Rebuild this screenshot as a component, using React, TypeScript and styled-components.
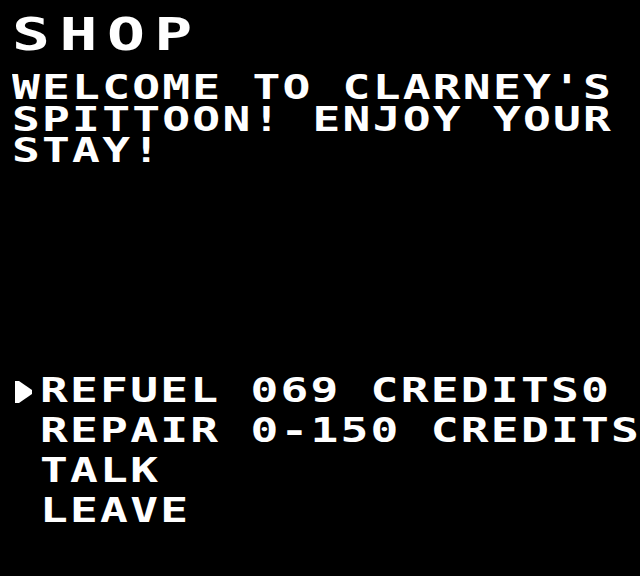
import React from "react";
import styled, { createGlobalStyle } from "styled-components";

const Global = createGlobalStyle`
  html, body {
    margin: 0;
    padding: 0;
    background: #000;
  }
  body {
    font-family: "DejaVu Sans Mono", "Liberation Mono", monospace;
    color: #fff;
  }
`;

const Screen = styled.div`
  width: 640px;
  height: 576px;
  background: #000;
  box-sizing: border-box;
  padding: 12px 0 45px 12px;
  display: flex;
  flex-direction: column;
  overflow: hidden;
`;

const Title = styled.h1`
  margin: 0;
  font-family: "DejaVu Sans Mono", monospace;
  font-weight: 700;
  font-size: 45px;
  line-height: 45px;
  letter-spacing: 6.8px;
  color: #fff;
  white-space: pre;
  transform: scaleX(1.4);
  transform-origin: left center;
`;

const Message = styled.div`
  margin-top: 15px;
  display: flex;
  flex-direction: column;
`;

const TextLine = styled.div<{ $pitch: number }>`
  font-family: "DejaVu Sans Mono", monospace;
  font-weight: 700;
  font-size: 33px;
  line-height: ${(p) => p.$pitch}px;
  letter-spacing: 1.6px;
  color: #fff;
  white-space: pre;
  transform: scaleX(1.4);
  transform-origin: left center;
`;

const Menu = styled.ul`
  list-style: none;
  margin: auto 0 0 0;
  padding: 0;
  display: flex;
  flex-direction: column;
`;

const MenuRow = styled.li`
  display: flex;
  align-items: center;
  height: 40px;
`;

const CursorCell = styled.div`
  width: 28px;
  height: 40px;
  display: flex;
  align-items: center;
  flex-shrink: 0;
  padding-left: 3px;
  box-sizing: border-box;
  padding-top: 1px;
`;

const Cursor = () => (
  <svg width="17" height="22" viewBox="0 0 17 22">
    <polygon points="0,0 4,0 17,9 17,13 4,22 0,22" fill="#fff" />
  </svg>
);

const messageLines = ["WELCOME TO CLARNEY'S", "SPITTOON! ENJOY YOUR", "STAY!"];

const items = [
  { label: "REFUEL 069 CREDITS0", selected: true },
  { label: "REPAIR 0-150 CREDITS", selected: false },
  { label: "TALK", selected: false },
  { label: "LEAVE", selected: false },
];

export default function App() {
  return (
    <>
      <Global />
      <Screen>
        <Title>SHOP</Title>
        <Message>
          {messageLines.map((l) => (
            <TextLine key={l} $pitch={31.5}>
              {l}
            </TextLine>
          ))}
        </Message>
        <Menu>
          {items.map((it) => (
            <MenuRow key={it.label}>
              <CursorCell>{it.selected ? <Cursor /> : null}</CursorCell>
              <TextLine $pitch={40}>{it.label}</TextLine>
            </MenuRow>
          ))}
        </Menu>
      </Screen>
    </>
  );
}
